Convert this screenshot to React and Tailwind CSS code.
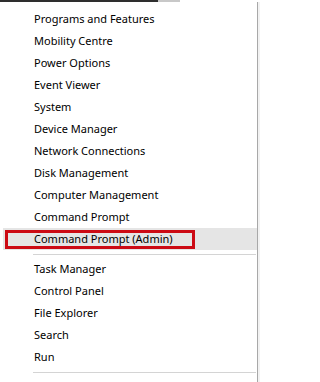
const TOP_ITEMS = [
  "Programs and Features",
  "Mobility Centre",
  "Power Options",
  "Event Viewer",
  "System",
  "Device Manager",
  "Network Connections",
  "Disk Management",
  "Computer Management",
  "Command Prompt",
];

const BOTTOM_ITEMS = ["Task Manager", "Control Panel", "File Explorer", "Search", "Run"];

function Item({ label }) {
  return (
    <div className="h-[22px] pl-[34px] leading-[22px] whitespace-nowrap">{label}</div>
  );
}

function Separator() {
  return (
    <div className="h-[8px] flex items-center pl-[33px] pr-[1px]">
      <div className="h-px w-full bg-[#d4d4d4]" />
    </div>
  );
}

export default function App() {
  return (
    <div
      className="w-[260px] h-[382px] overflow-hidden bg-white text-[11px] text-black flex flex-col"
      style={{ fontFamily: '"Noto Sans", "Open Sans", sans-serif' }}
    >
      <div className="h-[2px] flex shrink-0">
        <div className="w-[158px] bg-[#2e2e2e]" />
        <div className="w-[22px] bg-[#c8c8c8]" />
        <div className="flex-1 bg-white" />
      </div>

      <div className="flex flex-1">
        <div className="flex-1 flex flex-col pt-[6px] border-r border-[#a8a8a8]">
          {TOP_ITEMS.map((item) => (
            <Item key={item} label={item} />
          ))}

          {/* highlighted row with the red annotation box */}
          <div className="relative h-[22px] ml-[3px] bg-[#e5e5e5] pl-[31px] leading-[22px] whitespace-nowrap">
            Command Prompt (Admin)
            <div className="absolute left-[2px] top-[2px] w-[190px] h-[19px] border-[3px] border-[#cc0a14]" />
          </div>

          <Separator />

          {BOTTOM_ITEMS.map((item) => (
            <Item key={item} label={item} />
          ))}

          <Separator />

          <div className="h-[22px] pl-[34px] pr-[12px] leading-[22px] flex justify-between whitespace-nowrap">
            <span>Shut down or sign out</span>
            <span className="text-[#555]">›</span>
          </div>
        </div>
        <div className="w-[2px] bg-[#f2f2f2]" />
      </div>
    </div>
  );
}
